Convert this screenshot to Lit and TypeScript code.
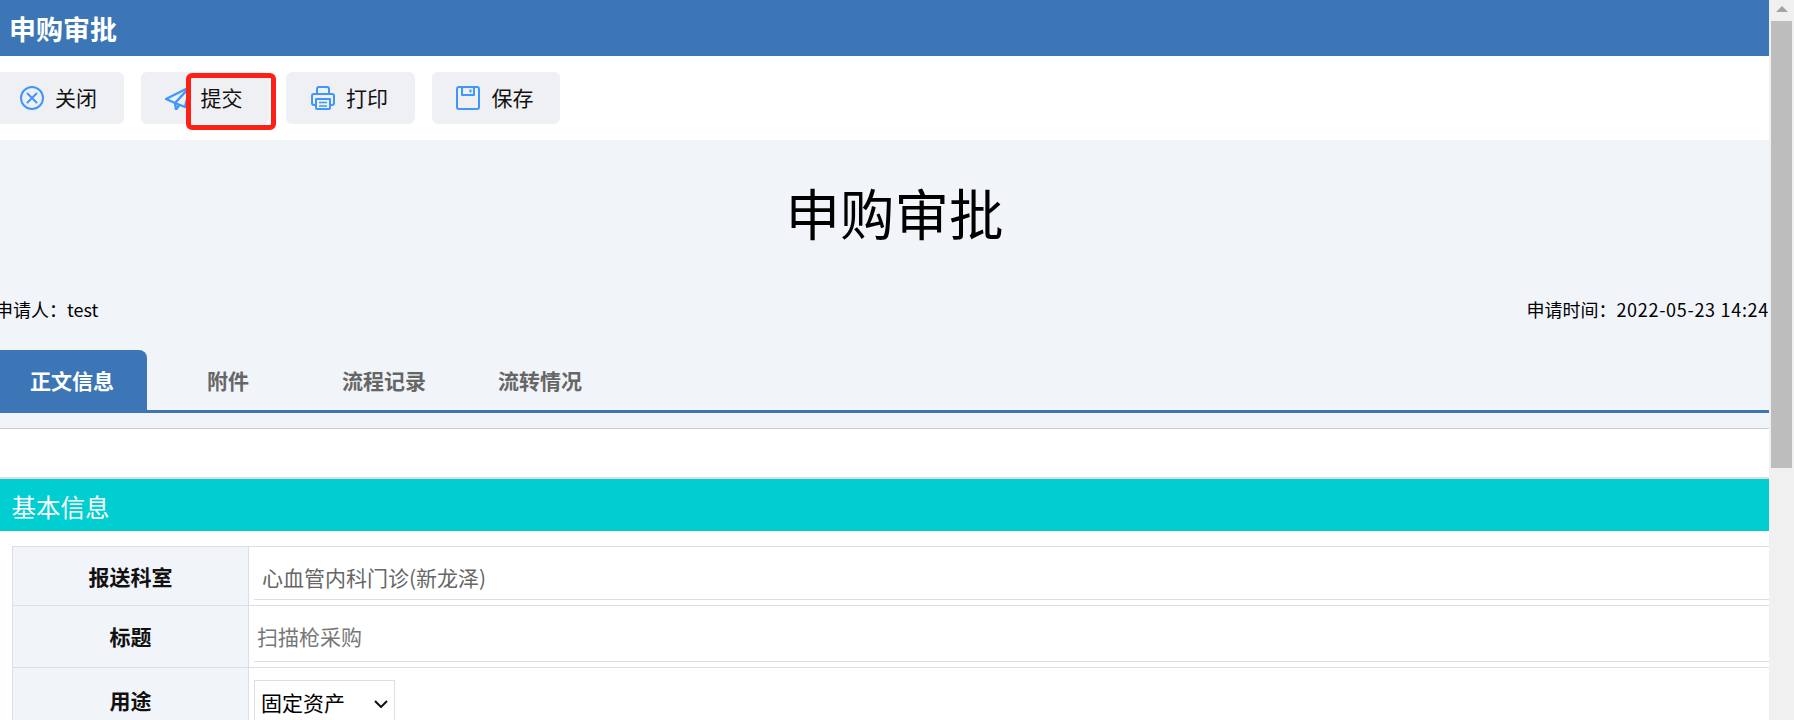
import { LitElement, html, css } from "lit";
import { customElement } from "lit/decorators.js";

const ICON = "#3f97fb";

@customElement("app-root")
export class AppRoot extends LitElement {
  static styles = css`
    :host {
      display: flex;
      width: 1794px;
      height: 720px;
      overflow: hidden;
      position: relative;
      font-family: "Noto Sans CJK SC", "Noto Sans", sans-serif;
      background: #fff;
    }
    .page { width: 1769px; height: 720px; overflow: hidden; flex: none; }
    .scrollbar { width: 25px; height: 720px; flex: none; background: #f0f0f0; display: flex; flex-direction: column; align-items: center; }
    .arrow { width: 0; height: 0; margin-top: 6px; border-left: 6px solid transparent; border-right: 6px solid transparent; border-bottom: 6px solid #a3a3a3; }
    .thumb { width: 21px; height: 447px; margin-top: 9px; background: #bdbdbd; }
    .header { height: 56px; background: #3d76b6; color: #fff; display: flex; align-items: center; padding-left: 9px; font-size: 27px; font-weight: 700; }
    .shift { margin-left: -5px; }
    .toolbar { height: 84px; box-sizing: border-box; padding-top: 16px; display: flex; gap: 17px; }
    .btn { height: 52px; width: 128.5px; box-sizing: border-box; border-radius: 6px; background: #eff0f3; display: flex; align-items: center; padding-left: 24.5px; gap: 11.5px; font-size: 21px; color: #111; }
    .btn span { margin-top: -2px; }
    .btn svg { width: 24px; height: 24px; flex: none; }
    .panel { height: 289px; box-sizing: border-box; background: #f1f4f9; border-bottom: 1px solid #ccc; display: flex; flex-direction: column; }
    .title { height: 154px; box-sizing: border-box; padding-left: 25px; text-align: center; font-size: 54.5px; line-height: 144px; color: #000; }
    .meta { height: 30px; display: flex; justify-content: space-between; font-size: 18px; line-height: 30px; color: #000; }
    .date { letter-spacing: 0.7px; }
    .tabs { margin-top: 26px; height: 63px; box-sizing: border-box; border-bottom: 3px solid #3d76b6; display: flex; }
    .tab { width: 156px; height: 60px; text-align: center; font-size: 21px; font-weight: 700; line-height: 60px; color: #666; }
    .tab.active { width: 152px; box-sizing: border-box; padding-left: 2px; margin-right: 3px; background: #3d76b6; color: #fff; border-radius: 0 8px 0 0; }
    .gap { height: 48px; border-bottom: 2px solid #dedede; }
    .section { height: 52px; background: #00ced1; color: #fff; font-size: 24.5px; line-height: 56px; padding-left: 16.5px; }
    .table { margin: 15px 0 0 17px; border-top: 1px solid #dcdee6; border-left: 1px solid #dcdee6; }
    .row { display: grid; grid-template-columns: 236px 1fr; border-bottom: 1px solid #dcdee6; box-sizing: border-box; }
    .row.r1 { height: 59px; }
    .row.r2 { height: 62px; }
    .row.r3 { height: 70px; }
    .label { box-sizing: border-box; background: #f1f4f9; border-right: 1px solid #dcdee6; display: flex; align-items: center; justify-content: center; font-size: 21px; font-weight: 700; color: #111; }
    .r2 .label { padding-bottom: 2px; }
    .r3 .label { padding-bottom: 6px; }
    .value { padding-left: 5px; display: flex; }
    .field { flex: 1; border-bottom: 1px solid #dcdee6; font-size: 21px; color: #666; line-height: 60px; }
    .r1 .field { height: 52px; padding-left: 8px; }
    .r2 .field { height: 55px; padding-left: 3px; color: #777; }
    .pick { position: relative; width: 141px; height: 46px; margin-top: 12px; }
    select { appearance: none; width: 100%; height: 100%; box-sizing: border-box; border: 1px solid #dcdee6; background: #fff; font: inherit; font-size: 21px; color: #000; padding: 0 0 2px 6px; border-radius: 0; }
    .chev { position: absolute; left: 120px; top: 20px; width: 14px; height: 8px; }
    .mark { position: absolute; left: 186px; top: 73px; width: 90px; height: 57px; box-sizing: border-box; border: 5px solid #ff2015; border-radius: 6px; }
  `;

  render() {
    return html`
      <div class="page">
        <div class="header">申购审批</div>
        <div class="shift">
          <div class="toolbar">
            <div class="btn">
              <svg viewBox="0 0 24 24" fill="none" stroke="${ICON}" stroke-width="2" stroke-linecap="round"><circle cx="12" cy="12" r="11"/><path d="M7.5 7.5l9 9M16.5 7.5l-9 9"/></svg>
              <span>关闭</span>
            </div>
            <div class="btn">
              <svg viewBox="0 0 24 24" fill="none" stroke="${ICON}" stroke-width="2.4" stroke-linejoin="round" stroke-linecap="round"><path d="M1 13L25 1l-5 20-10-4z"/><path d="M10 17l1 6.5 3.5-4.5M10 17L25 1"/></svg>
              <span>提交</span>
            </div>
            <div class="btn">
              <svg viewBox="0 0 24 24" fill="none" stroke="${ICON}" stroke-width="2" stroke-linejoin="round"><path d="M6 8V3a2 2 0 012-2h8a2 2 0 012 2v5"/><path d="M5 19H3a2 2 0 01-2-2v-7a2 2 0 012-2h18a2 2 0 012 2v7a2 2 0 01-2 2h-2"/><path d="M5 13h14v9a1 1 0 01-1 1H6a1 1 0 01-1-1z"/><path d="M8 16.5h8M8 20h8" stroke-width="1.5"/></svg>
              <span>打印</span>
            </div>
            <div class="btn">
              <svg viewBox="0 0 24 24" fill="none" stroke="${ICON}" stroke-width="2" stroke-linejoin="round"><rect x="1" y="1" width="22" height="22" rx="2"/><path d="M6 1v8h12V1"/><path d="M14.5 3.5v3"/></svg>
              <span>保存</span>
            </div>
          </div>
          <div class="panel">
            <div class="title">申购审批</div>
            <div class="meta"><span>申请人：test</span><span>申请时间：<span class="date">2022-05-23 14:24</span></span></div>
            <div class="tabs">
              <div class="tab active">正文信息</div>
              <div class="tab">附件</div>
              <div class="tab">流程记录</div>
              <div class="tab">流转情况</div>
            </div>
          </div>
          <div class="gap"></div>
          <div class="section">基本信息</div>
          <div class="table">
            <div class="row r1"><div class="label">报送科室</div><div class="value"><div class="field">心血管内科门诊(新龙泽)</div></div></div>
            <div class="row r2"><div class="label">标题</div><div class="value"><div class="field">扫描枪采购</div></div></div>
            <div class="row r3"><div class="label">用途</div><div class="value"><div class="pick"><select><option>固定资产</option></select><svg class="chev" viewBox="0 0 14 8" fill="none" stroke="#111" stroke-width="2"><path d="M1 1l6 6 6-6"/></svg></div></div></div>
          </div>
        </div>
      </div>
      <div class="scrollbar"><div class="arrow"></div><div class="thumb"></div></div>
      <div class="mark"></div>
    `;
  }
}
